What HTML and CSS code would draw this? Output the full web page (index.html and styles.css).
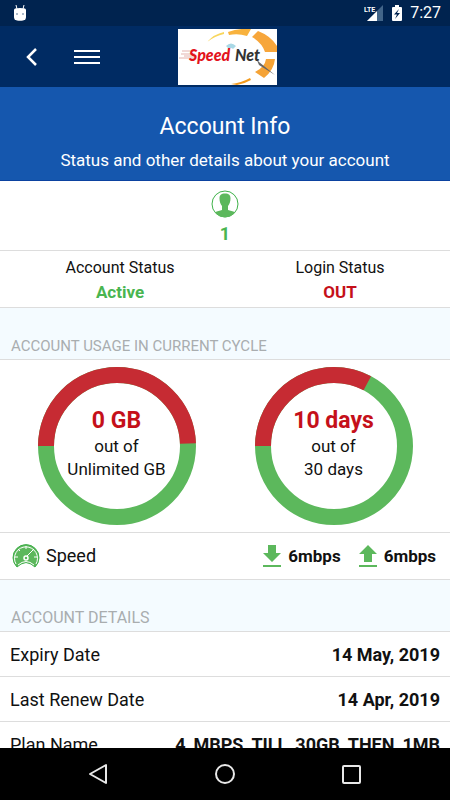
FILE: index.html
```
<!DOCTYPE html>
<html lang="en">
<head>
    <meta charset="UTF-8">
    <meta name="viewport" content="width=device-width, initial-scale=1.0">
    <title>Account Info</title>
    <link rel="stylesheet" href="styles.css">
</head>
<body>

    <div class="status-bar">
        <svg width="14" height="16" viewBox="0 0 14 16">
            <path d="M3 0l1 4M11 0l-1 4" stroke="#fff" stroke-width="1"/>
            <path d="M1 5q0-1 1-1.500q5-1 10 0 1 .5 1 1.500v7q0 3-3 3.500-3 .5-6 0-3-.5-3-3.500z" fill="#fff"/>
            <circle cx="4" cy="9" r="0.700" fill="#1d4470"/>
            <circle cx="10" cy="9" r="0.700" fill="#1d4470"/>
        </svg>
        <div class="status-right">
            <svg width="20" height="16" viewBox="0 0 20 16">
                <path d="M19 0v16H3z" fill="#426589"/>
                <path d="M0 0h13v8H0z" fill="#00234f"/>
                <text x="0" y="7" class="lte">LTE</text>
                <path d="M13 6v10H3l5-5 5-5z" fill="#fff"/>
            </svg>
            <svg width="10" height="16" viewBox="0 0 10 16">
                <path d="M3 0h4v2h2q1 0 1 1v12q0 1-1 1H1q-1 0-1-1V3q0-1 1-1h2z" fill="#fff"/>
                <path d="M7 4L2 9.500h3L3 14l5-6H5z" fill="#00234f"/>
            </svg>
            <span class="time">7:27</span>
        </div>
    </div>

    <header class="nav-bar">
        <div class="nav-buttons">
            <button class="icon-button" aria-label="Back">
                <svg width="12" height="18" viewBox="0 0 12 18">
                    <path d="M10 1L2 9l8 8" fill="none" stroke="#fff" stroke-width="2.500"/>
                </svg>
            </button>
            <button class="icon-button" aria-label="Menu">
                <svg width="26" height="16" viewBox="0 0 26 16">
                    <path d="M0 2h26M0 8h26M0 14h26" stroke="#fff" stroke-width="2"/>
                </svg>
            </button>
        </div>
        <a href="#" class="logo" aria-label="Speed Net">
            <svg width="99" height="56" viewBox="0 0 99 56">
                <rect width="99" height="56" fill="#fff"/>
                <path d="M29 13Q36 5 46 3v2Q37 7 29 13z" fill="#f8d65c"/>
                <path d="M50 3Q61-1 73 0l-4 7Q60 4 51 6z" fill="#f8b23d"/>
                <path d="M80 2Q93 7 99 17v6H87Q84 14 74 8z" fill="#f7a63b"/>
                <path d="M97 30Q96 41 86 49l-9-6q10-5 11-13z" fill="#f5a336"/>
                <path d="M53 55q10-1 19-6l1 2q-7 4-14 5z" fill="#f39a1c"/>
                <path d="M48 17q5-5 10 0l-3 3q-2-2-4 0z" fill="#a9d8e6"/>
                <path d="M4 22h14M3 25h14M6 27h10M1 29h16" stroke="#d9938e" stroke-width="1" opacity=".7"/>
                <path d="M78 29l3 4 16 13-16-10z" fill="#666"/>
                <text x="11" y="32" class="logo-speed">Speed</text>
                <text x="57" y="32" class="logo-net">Net</text>
            </svg>
        </a>
    </header>

    <main class="content">
        <div class="banner">
            <h1>Account Info</h1>
            <p>Status and other details about your account</p>
        </div>

        <div class="user-row">
            <svg width="28" height="28" viewBox="0 0 28 28">
                <circle cx="14" cy="14" r="13" fill="#fff" stroke="#3fb24a" stroke-width="1"/>
                <path d="M14 3.500c4 0 5.500 1.500 5.500 5 0 3-1 5.500-2.500 7.500v4c2 1 5 1 7 2.500A13 13 0 0 1 4 22.500c2-1.500 5-1.500 7-2.500v-4c-1.500-2-2.500-4.500-2.500-7.500C8.500 5 10 3.500 14 3.500z" fill="#5cb85c"/>
            </svg>
            <span class="bold green">1</span>
        </div>

        <div class="status-row">
            <div>
                <p>Account Status</p>
                <p class="status-value green">Active</p>
            </div>
            <div>
                <p>Login Status</p>
                <p class="status-value red">OUT</p>
            </div>
        </div>

        <h2 class="usage-title">ACCOUNT USAGE IN CURRENT CYCLE</h2>

        <div class="usage-row">
            <div class="ring">
                <svg width="158" height="158" viewBox="0 0 158 158">
                    <circle cx="79" cy="79" r="71" class="ring-track"/>
                    <circle cx="79" cy="79" r="71" class="ring-used" pathLength="360" stroke-dasharray="178 360" transform="rotate(180 79 79)"/>
                </svg>
                <div class="ring-text">
                    <p class="ring-value">0 GB</p>
                    <p>out of</p>
                    <p>Unlimited GB</p>
                </div>
            </div>
            <div class="ring">
                <svg width="158" height="158" viewBox="0 0 158 158">
                    <circle cx="79" cy="79" r="71" class="ring-track"/>
                    <circle cx="79" cy="79" r="71" class="ring-used" pathLength="360" stroke-dasharray="118 360" transform="rotate(180 79 79)"/>
                </svg>
                <div class="ring-text">
                    <p class="ring-value">10 days</p>
                    <p>out of</p>
                    <p>30 days</p>
                </div>
            </div>
        </div>

        <div class="speed-row">
            <div class="speed-label">
                <svg width="28" height="26" viewBox="0 0 28 26">
                    <path d="M5 24A13 13 0 1 1 23 24l-4-3q-5-3-10 0z" fill="#5cb85c" stroke="#3fae49"/>
                    <path d="M4 21A11.500 11.500 0 1 1 24 21M6 22q8-7 16 0" fill="none" stroke="#fff" stroke-width="1"/>
                    <path d="M14 3v3M6 6l2 2M22 6l-2 2M3 14h3M25 14h-3M15 13l5-5" stroke="#fff" stroke-width="1"/>
                    <circle cx="14" cy="15" r="2" fill="#5cb85c" stroke="#fff" stroke-width="1.500"/>
                </svg>
                <span>Speed</span>
            </div>
            <div class="speed-item">
                <svg width="18" height="22" viewBox="0 0 18 22">
                    <path d="M5 0h8v8h5l-9 9-9-9h5zM0 20h18v2H0z" fill="#5cb85c"/>
                </svg>
                <span>6mbps</span>
            </div>
            <div class="speed-item">
                <svg width="18" height="22" viewBox="0 0 18 22">
                    <path d="M9 0l9 9h-5v8H5V9H0zM0 20h18v2H0z" fill="#5cb85c"/>
                </svg>
                <span>6mbps</span>
            </div>
        </div>

        <h2>ACCOUNT DETAILS</h2>

        <table class="details">
            <tr>
                <th>Expiry Date</th>
                <td>14 May, 2019</td>
            </tr>
            <tr>
                <th>Last Renew Date</th>
                <td>14 Apr, 2019</td>
            </tr>
            <tr>
                <th>Plan Name</th>
                <td>4_MBPS_TILL_30GB_THEN_1MB</td>
            </tr>
        </table>
    </main>

    <nav class="bottom-bar">
        <button class="icon-button" aria-label="Back">
            <svg width="20" height="22" viewBox="0 0 20 22">
                <path d="M18 2v18L2 11z" fill="none" stroke="#e8e8e8" stroke-width="2" stroke-linejoin="round"/>
            </svg>
        </button>
        <button class="icon-button" aria-label="Home">
            <svg width="22" height="22" viewBox="0 0 22 22">
                <circle cx="11" cy="11" r="9" fill="none" stroke="#e8e8e8" stroke-width="2"/>
            </svg>
        </button>
        <button class="icon-button" aria-label="Recent apps">
            <svg width="20" height="20" viewBox="0 0 20 20">
                <rect x="1" y="2" width="17" height="17" rx="1" fill="none" stroke="#e8e8e8" stroke-width="2"/>
            </svg>
        </button>
    </nav>

</body>
</html>
```
FILE: styles.css
```
* {
    box-sizing: border-box;
}
body {
    margin: 0;
    height: 100vh;
    display: flex;
    flex-direction: column;
    font-family: Roboto, Arial, sans-serif;
    font-size: 18px;
    line-height: 24px;
    color: #111;
    background-color: #fff;
    overflow: hidden;
}
p, h1, h2 {
    margin: 0;
    font-weight: normal;
}
svg {
    display: block;
}
.bold {
    font-weight: bold;
}
.green {
    color: #49b550;
}
.red {
    color: #c5101a;
}

/* phone status bar */
.status-bar {
    display: flex;
    justify-content: space-between;
    align-items: center;
    padding: 1px 9px 1px 13px;
    background-color: #00234f;
    color: #fff;
}
.status-right {
    display: flex;
    align-items: center;
    gap: 8px;
}
.time {
    font-size: 16px;
}
.lte {
    font-size: 7px;
    font-weight: bold;
    fill: #fff;
}

.nav-bar {
    display: grid;
    grid-template-columns: 1fr auto 1fr;
    align-items: center;
    padding: 3px 0 2px 4px;
    background-color: #002b63;
}
.nav-buttons {
    display: flex;
    align-items: center;
    padding-left: 14px;
    gap: 20px;
}
.icon-button {
    display: flex;
    align-items: center;
    justify-content: center;
    padding: 8px;
    border: none;
    background: none;
    cursor: pointer;
}
.logo-speed,
.logo-net {
    font-family: Lato, sans-serif;
    font-size: 16px;
    font-weight: 900;
    font-style: italic;
    fill: #e3131b;
}
.logo-net {
    fill: #333;
}

.content {
    flex: 1;
    min-height: 0;
    overflow: hidden;
}
.banner {
    padding: 24px 10px 8px;
    text-align: center;
    color: #fff;
    background-color: #1557ae;
    border-bottom: 1px solid #0b42a0;
}
.banner h1 {
    font-size: 23px;
    line-height: 32px;
}
.banner p {
    padding-top: 5px;
    font-size: 17px;
}
.user-row {
    display: flex;
    flex-direction: column;
    align-items: center;
    gap: 4px;
    padding: 9px 0 4px;
    border-bottom: 1px solid #ddd;
}
.status-row {
    display: flex;
    padding: 5px 0 3px 10px;
    font-size: 16px;
    text-align: center;
    border-bottom: 1px solid #ddd;
}
.status-row div {
    flex: 1;
}
.status-value {
    font-size: 17px;
    font-weight: bold;
}
h2 {
    padding: 26px 11px 1px;
    font-size: 16px;
    color: #a9adaf;
    background-color: #f4fbff;
    border-bottom: 1px solid #ddd;
}
.usage-title {
    font-size: 15px;
}

/* usage rings */
.usage-row {
    display: flex;
    justify-content: space-around;
    padding: 7px 8px;
    border-bottom: 1px solid #ddd;
}
.ring {
    display: grid;
    place-items: center;
}
.ring > * {
    grid-area: 1 / 1;
}
.ring-track,
.ring-used {
    fill: none;
    stroke: #5cb85c;
    stroke-width: 16;
}
.ring-used {
    stroke: #c62b33;
}
.ring-text {
    padding-bottom: 4px;
    font-size: 17px;
    line-height: 23px;
    text-align: center;
}
.ring-value {
    font-size: 23px;
    font-weight: bold;
    line-height: 28px;
    color: #c5101a;
}

.speed-row {
    display: flex;
    gap: 18px;
    padding: 10px 14px 10px 12px;
    border-bottom: 1px solid #ddd;
}
.speed-label,
.speed-item {
    display: flex;
    align-items: center;
    gap: 6px;
}
.speed-label {
    flex: 1;
}
.speed-item {
    gap: 7px;
    font-size: 17px;
    font-weight: bold;
}
.details {
    width: 100%;
    border-collapse: collapse;
}
.details th,
.details td {
    padding: 11px 10px 9px;
    border-bottom: 1px solid #ddd;
    font-weight: normal;
    text-align: left;
}
.details td {
    font-weight: bold;
    text-align: right;
}

/* phone navigation keys */
.bottom-bar {
    display: flex;
    justify-content: center;
    align-items: center;
    gap: 90px;
    padding: 7px 0;
    background-color: #000;
}
```
